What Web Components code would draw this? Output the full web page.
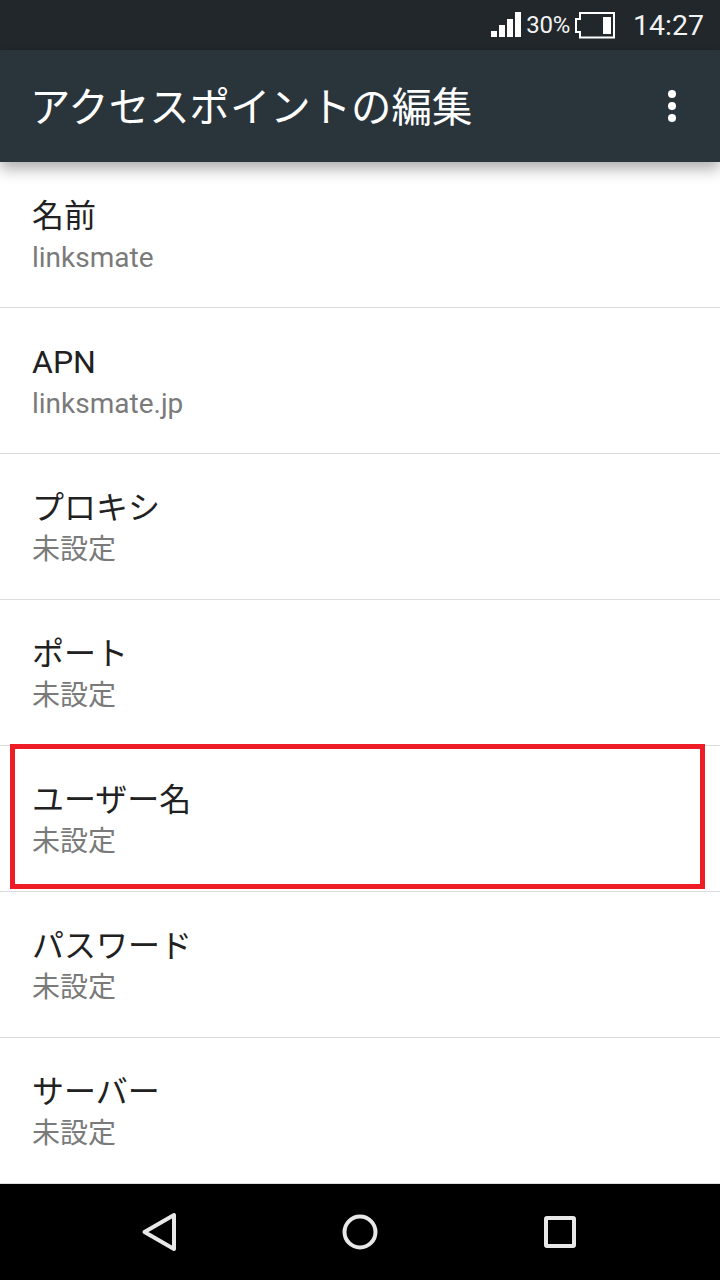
<!DOCTYPE html>
<html lang="ja">
<head>
<meta charset="utf-8">
<title>アクセスポイントの編集</title>
<style>
  html, body { margin: 0; padding: 0; background: #fff; }
  body { width: 720px; height: 1280px; overflow: hidden; display: flex; flex-direction: column; font-family: Roboto, "Noto Sans CJK JP", sans-serif; }
</style>
</head>
<body>
<status-bar></status-bar>
<app-bar>アクセスポイントの編集</app-bar>
<pref-list>
  <pref-row label="名前" value="linksmate"></pref-row>
  <pref-row label="APN" value="linksmate.jp"></pref-row>
  <pref-row label="プロキシ" value="未設定"></pref-row>
  <pref-row label="ポート" value="未設定"></pref-row>
  <pref-row label="ユーザー名" value="未設定" marked></pref-row>
  <pref-row label="パスワード" value="未設定"></pref-row>
  <pref-row label="サーバー" value="未設定"></pref-row>
</pref-list>
<nav-bar></nav-bar>

<script>
class StatusBar extends HTMLElement {
  constructor() {
    super();
    this.attachShadow({ mode: "open" });
    this.shadowRoot.innerHTML = `
      <style>
        :host { display: flex; align-items: center; justify-content: flex-end; height: 50px; flex: none; background: #21272b; color: #f2f2f2; padding-right: 16px; box-sizing: border-box; }
        svg { display: block; flex: none; }
        .pct { font-size: 24px; margin-left: 4px; letter-spacing: -0.3px; }
        .batt { margin-left: 5px; }
        .time { font-size: 28.500px; margin-left: 18px; }
      </style>
      <svg width="31" height="26" viewBox="0 0 31 26" fill="#fff">
        <rect x="0" y="19" width="6" height="6"/>
        <rect x="8" y="13" width="6" height="12"/>
        <rect x="16" y="7" width="6" height="18"/>
        <rect x="24" y="0" width="6" height="25"/>
      </svg>
      <span class="pct">30%</span>
      <svg class="batt" width="40" height="27" viewBox="0 0 40 27" fill="none">
        <path d="M5 1H39V25.500H5V20H1V7H5Z" stroke="#fff" stroke-width="2"/>
        <rect x="28" y="5" width="8" height="17" fill="#fff"/>
      </svg>
      <span class="time">14:27</span>
    `;
  }
}

class AppBar extends HTMLElement {
  constructor() {
    super();
    this.attachShadow({ mode: "open" });
    this.shadowRoot.innerHTML = `
      <style>
        :host { display: flex; align-items: center; justify-content: space-between; height: 112px; flex: none; background: #2a343b; color: #fff; padding: 0 44px 4px 30px; box-sizing: border-box; position: relative; z-index: 1; box-shadow: 0 7px 14px rgba(0,0,0,.32); font-size: 40.400px; }
        .dots { display: flex; flex-direction: column; gap: 4px; padding-top: 4px; }
        .dots i { display: block; width: 8px; height: 8px; border-radius: 50%; background: #fff; }
      </style>
      <span><slot></slot></span>
      <div class="dots"><i></i><i></i><i></i></div>
    `;
  }
}

class PrefList extends HTMLElement {
  constructor() {
    super();
    this.attachShadow({ mode: "open" });
    this.shadowRoot.innerHTML = `
      <style>
        :host { display: flex; flex-direction: column; flex: 1; background: #fff; }
      </style>
      <slot></slot>
    `;
  }
}

class PrefRow extends HTMLElement {
  constructor() {
    super();
    this.attachShadow({ mode: "open" });
    const marked = this.hasAttribute("marked");
    this.shadowRoot.innerHTML = `
      <style>
        :host { display: block; height: 146px; flex: none; box-sizing: border-box; padding: 31px 32px 0; border-bottom: 1px solid #dcdcdc; position: relative; }
        .label { font-size: 32px; line-height: 46px; color: #212121; }
        .value { font-size: 28px; line-height: 38px; color: #7a7a7a; }
        .mark { position: absolute; left: 10px; top: -2px; width: 695px; height: 145px; box-sizing: border-box; border: 5px solid #ee1c25; }
      </style>
      <div class="label">${this.getAttribute("label")}</div>
      <div class="value">${this.getAttribute("value")}</div>
      ${marked ? '<div class="mark"></div>' : ""}
    `;
  }
}

class NavBar extends HTMLElement {
  constructor() {
    super();
    this.attachShadow({ mode: "open" });
    this.shadowRoot.innerHTML = `
      <style>
        :host { display: grid; grid-template-columns: repeat(3, 200px); justify-content: center; align-items: center; height: 96px; flex: none; background: #000; }
        svg { display: block; margin: auto; }
      </style>
      <svg width="40" height="40" viewBox="0 0 40 40" fill="none" stroke="#e8e8e8" stroke-width="4" stroke-linejoin="round">
        <path d="M34 3V37L4.500 20Z"/>
      </svg>
      <svg width="40" height="40" viewBox="0 0 40 40" fill="none" stroke="#e8e8e8" stroke-width="4">
        <circle cx="20" cy="20" r="15.500"/>
      </svg>
      <svg width="40" height="40" viewBox="0 0 40 40" fill="none" stroke="#e8e8e8" stroke-width="4" stroke-linejoin="round">
        <rect x="6" y="6" width="28" height="28" rx="1"/>
      </svg>
    `;
  }
}

customElements.define("status-bar", StatusBar);
customElements.define("app-bar", AppBar);
customElements.define("pref-list", PrefList);
customElements.define("pref-row", PrefRow);
customElements.define("nav-bar", NavBar);
</script>
</body>
</html>
